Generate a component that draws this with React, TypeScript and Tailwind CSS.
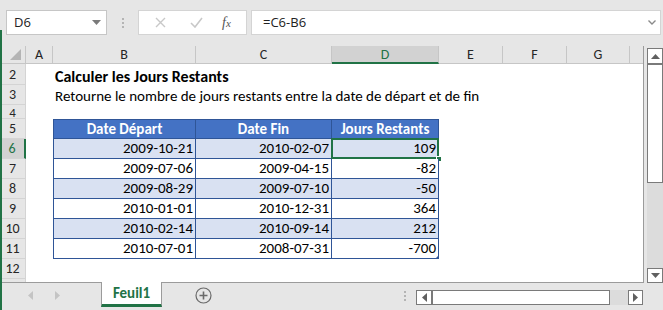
import React from "react";

const F = { fontFamily: "Carlito, Lato, 'Noto Sans', sans-serif" };

const cols = [
  { k: "A", w: "w-[27px]" },
  { k: "B", w: "w-[143px]" },
  { k: "C", w: "w-[136px]" },
  { k: "D", w: "w-[107px]" },
  { k: "E", w: "w-[64px]" },
  { k: "F", w: "w-[64px]" },
  { k: "G", w: "w-[63px]" },
];

const data = [
  ["2009-10-21", "2010-02-07", "109"],
  ["2009-07-06", "2009-04-15", "-82"],
  ["2009-08-29", "2009-07-10", "-50"],
  ["2010-01-01", "2010-12-31", "364"],
  ["2010-02-14", "2010-09-14", "212"],
  ["2010-07-01", "2008-07-31", "-700"],
];

function RowHead({ n, h, sel }: { n: string; h: string; sel?: boolean }) {
  return (
    <div
      className={`${h} w-[26px] shrink-0 flex items-center justify-center border-b border-r border-[#d4d4d4] text-[14px] ${
        sel ? "bg-[#d2d2d2] text-[#217346] border-r-2 border-r-[#217346]" : "bg-[#e6e6e6] text-[#262626]"
      }`}
    >
      <span className={n === "4" ? "text-[13px] leading-[10px] mt-[2px]" : ""}>{n}</span>
    </div>
  );
}

export default function App() {
  return (
    <div className="w-[663px] h-[310px] bg-[#e6e6e6] relative overflow-hidden select-none" style={F}>
      {/* left green edge */}
      <div className="absolute left-0 top-[30px] bottom-0 w-[2px] bg-[#217346] z-20" />

      {/* Formula bar */}
      <div className="h-[46px] flex items-start pt-[10px] pl-[6px]">
        <div className="w-[101px] h-[25px] bg-white border border-[#c6c6c6] flex items-center justify-between pl-[7px] pr-[5px]">
          <span className="text-[14px] text-[#222]" style={{ fontFamily: "'Open Sans', sans-serif", fontSize: 13 }}>D6</span>
          <svg width="9" height="5" viewBox="0 0 9 5"><path d="M0 0 L9 0 L4.5 5 Z" fill="#7a7a7a" /></svg>
        </div>
        <div className="w-[31px] h-[25px] flex flex-col items-center justify-center gap-[2px]">
          <div className="w-[2px] h-[2px] bg-[#b4b4b4]" />
          <div className="w-[2px] h-[2px] bg-[#b4b4b4]" />
          <div className="w-[2px] h-[2px] bg-[#b4b4b4]" />
        </div>
        <div className="w-[109px] h-[25px] bg-white border border-[#d4d4d4] flex items-center">
          <div className="w-[42px] flex justify-center">
            <svg width="11" height="11" viewBox="0 0 11 11"><path d="M1 1 L10 10 M10 1 L1 10" stroke="#c8c8c8" strokeWidth="1.4" /></svg>
          </div>
          <div className="w-[30px] flex justify-center">
            <svg width="13" height="11" viewBox="0 0 13 11"><path d="M1 6 L5 10 L12 1" stroke="#c8c8c8" strokeWidth="1.6" fill="none" /></svg>
          </div>
          <div className="flex-1 flex justify-center pr-[4px]">
            <span className="italic text-[#555] text-[14px] leading-none" style={{ fontFamily: "'Liberation Serif', serif" }}>
              f<span className="text-[11px]">x</span>
            </span>
          </div>
        </div>
        <div className="ml-[4px] w-[410px] h-[25px] bg-white border border-[#d4d4d4] flex items-center justify-between pl-[11px] pr-[4px]">
          <span className="text-[#222]" style={{ fontFamily: "'Open Sans', sans-serif", fontSize: 13 }}>=C6-B6</span>
          <svg width="8" height="5" viewBox="0 0 8 5"><path d="M0.5 0.5 L4 4 L7.5 0.5" stroke="#8a8a8a" strokeWidth="1.4" fill="none" /></svg>
        </div>
      </div>

      {/* Main area */}
      <div className="flex h-[237px]">
        <div className="w-[644px] h-[237px] bg-white border-r border-b border-[#9b9b9b] overflow-hidden flex flex-col">
          {/* column header */}
          <div className="flex h-[18px] shrink-0">
            <div className="w-[26px] shrink-0 bg-[#e6e6e6] border-r border-b border-[#c6c6c6] relative">
              <svg className="absolute right-[4px] bottom-[3px]" width="11" height="11" viewBox="0 0 11 11"><path d="M11 0 L11 11 L0 11 Z" fill="#b4b4b4" /></svg>
            </div>
            {cols.map((c) => (
              <div
                key={c.k}
                className={`${c.w} shrink-0 flex items-center justify-center text-[14px] border-r border-[#c6c6c6] ${
                  c.k === "D" ? "bg-[#d2d2d2] text-[#217346] border-b-2 border-b-[#217346]" : "bg-[#e6e6e6] text-[#262626] border-b border-b-[#c6c6c6]"
                }`}
              >
                {c.k}
              </div>
            ))}
            <div className="flex-1 bg-[#e6e6e6] border-b border-[#c6c6c6]" />
          </div>

          {/* row 2 */}
          <div className="flex h-[21px] shrink-0">
            <RowHead n="2" h="h-[21px]" />
            <div className="w-[27px] shrink-0" />
            <div className="pl-[2px] pt-[3px] text-[16px] font-bold text-black whitespace-nowrap leading-[19px]">Calculer les Jours Restants</div>
          </div>
          {/* row 3 */}
          <div className="flex h-[20px] shrink-0">
            <RowHead n="3" h="h-[20px]" />
            <div className="w-[27px] shrink-0" />
            <div className="pl-[2px] pt-[1px] text-[15px] text-black whitespace-nowrap leading-[20px]">
              Retourne le nombre de jours restants entre la date de départ et de fin
            </div>
          </div>
          {/* row 4 */}
          <div className="flex h-[14px] shrink-0">
            <RowHead n="4" h="h-[14px]" />
          </div>
          {/* row 5 header */}
          <div className="flex h-[20px] shrink-0">
            <RowHead n="5" h="h-[20px]" />
            <div className="w-[27px] shrink-0" />
            {["Date Départ", "Date Fin", "Jours Restants"].map((t, i) => (
              <div
                key={t}
                className={`${["w-[143px] border-l", "w-[136px]", "w-[107px]"][i]} shrink-0 bg-[#4472c4] border-t border-r border-b border-[#2f5597] text-white font-bold text-[15px] flex items-center justify-center`}
              >
                {t}
              </div>
            ))}
          </div>
          {data.map((r, i) => (
            <div key={i} className="flex h-[20px] shrink-0">
              <RowHead n={String(i + 6)} h="h-[20px]" sel={i === 0} />
              <div className="w-[27px] shrink-0" />
              {r.map((v, j) => (
                <div
                  key={j}
                  className={`${["w-[143px] border-l", "w-[136px]", "w-[107px]"][j]} shrink-0 ${
                    i % 2 === 0 ? "bg-[#d9e1f2]" : "bg-white"
                  } border-r border-b border-[#2f5597] text-[15px] text-black flex items-center justify-end pr-[2px] relative`}
                >
                  {v}
                  {i === 0 && j === 2 && (
                    <>
                      <div className="absolute -left-[1px] -top-[1px] -right-[1px] -bottom-[1px] border-2 border-[#217346]" />
                      <div className="absolute -right-[4px] -bottom-[4px] w-[6px] h-[6px] bg-[#217346] border border-white" />
                    </>
                  )}
                  {i === 5 && j === 2 && (
                    <div className="absolute -right-[1px] -bottom-[1px] w-[4px] h-[4px] bg-[#2f5597]" style={{ clipPath: "polygon(100% 0, 100% 100%, 0 100%)" }} />
                  )}
                </div>
              ))}
            </div>
          ))}
          {/* row 12 */}
          <div className="flex h-[20px] shrink-0">
            <RowHead n="12" h="h-[20px]" />
          </div>
          <div className="flex h-[6px] shrink-0">
            <div className="w-[26px] bg-[#e6e6e6] border-r border-[#d4d4d4]" />
          </div>
        </div>

        {/* vertical scrollbar */}
        <div className="ml-[3px] w-[16px] pt-[2px] flex flex-col">
          <div className="h-[16px] bg-white border border-[#7a7a7a] flex items-center justify-center">
            <svg width="9" height="5" viewBox="0 0 9 5"><path d="M0 5 L9 5 L4.5 0 Z" fill="#606060" /></svg>
          </div>
          <div className="h-[120px] bg-white border border-[#7a7a7a] border-t-[2px] border-t-[#7a7a7a] -mt-[1px]" />
          <div className="flex-1 bg-[#dcdcdc]" />
          <div className="h-[15px] bg-white border border-[#7a7a7a] flex items-center justify-center">
            <svg width="9" height="5" viewBox="0 0 9 5"><path d="M0 0 L9 0 L4.5 5 Z" fill="#606060" /></svg>
          </div>
        </div>
      </div>

      {/* bottom bar */}
      <div className="flex h-[27px] items-start">
        <div className="w-[101px] h-[25px] flex items-center pl-[28px] gap-[22px]">
          <svg width="5" height="9" viewBox="0 0 5 9"><path d="M5 0 L5 9 L0 4.5 Z" fill="#c4c4c4" /></svg>
          <svg width="5" height="9" viewBox="0 0 5 9"><path d="M0 0 L0 9 L5 4.5 Z" fill="#c4c4c4" /></svg>
        </div>
        <div className="w-[61px] h-[25px] -mt-[1px] bg-white border-x border-[#9b9b9b] border-b-[3px] border-b-[#217346] flex items-center justify-center text-[15px] font-bold text-[#217346]">
          Feuil1
        </div>
        <div className="w-[82px] h-[25px] flex items-center justify-center">
          <svg width="17" height="17" viewBox="0 0 17 17">
            <circle cx="8.5" cy="8.5" r="7.5" fill="none" stroke="#6a6a6a" strokeWidth="1.2" />
            <path d="M8.5 4.5 V12.5 M4.5 8.5 H12.5" stroke="#6a6a6a" strokeWidth="1.6" />
          </svg>
        </div>
        <div className="w-[150px]" />
        <div className="w-[22px] h-[25px] flex flex-col items-center justify-center gap-[2px]">
          <div className="w-[2px] h-[2px] bg-[#b4b4b4]" />
          <div className="w-[2px] h-[2px] bg-[#b4b4b4]" />
          <div className="w-[2px] h-[2px] bg-[#b4b4b4]" />
        </div>
        <div className="mt-[7px] flex h-[15px] w-[227px]">
          <div className="w-[16px] bg-white border border-[#7a7a7a] flex items-center justify-center">
            <svg width="5" height="9" viewBox="0 0 5 9"><path d="M5 0 L5 9 L0 4.5 Z" fill="#606060" /></svg>
          </div>
          <div className="w-[179px] bg-white border border-[#7a7a7a] border-l-[2px] -ml-[1px]" />
          <div className="flex-1 bg-[#dcdcdc]" />
          <div className="w-[15px] bg-white border border-[#7a7a7a] flex items-center justify-center">
            <svg width="5" height="9" viewBox="0 0 5 9"><path d="M0 0 L0 9 L5 4.5 Z" fill="#606060" /></svg>
          </div>
        </div>
      </div>
    </div>
  );
}
